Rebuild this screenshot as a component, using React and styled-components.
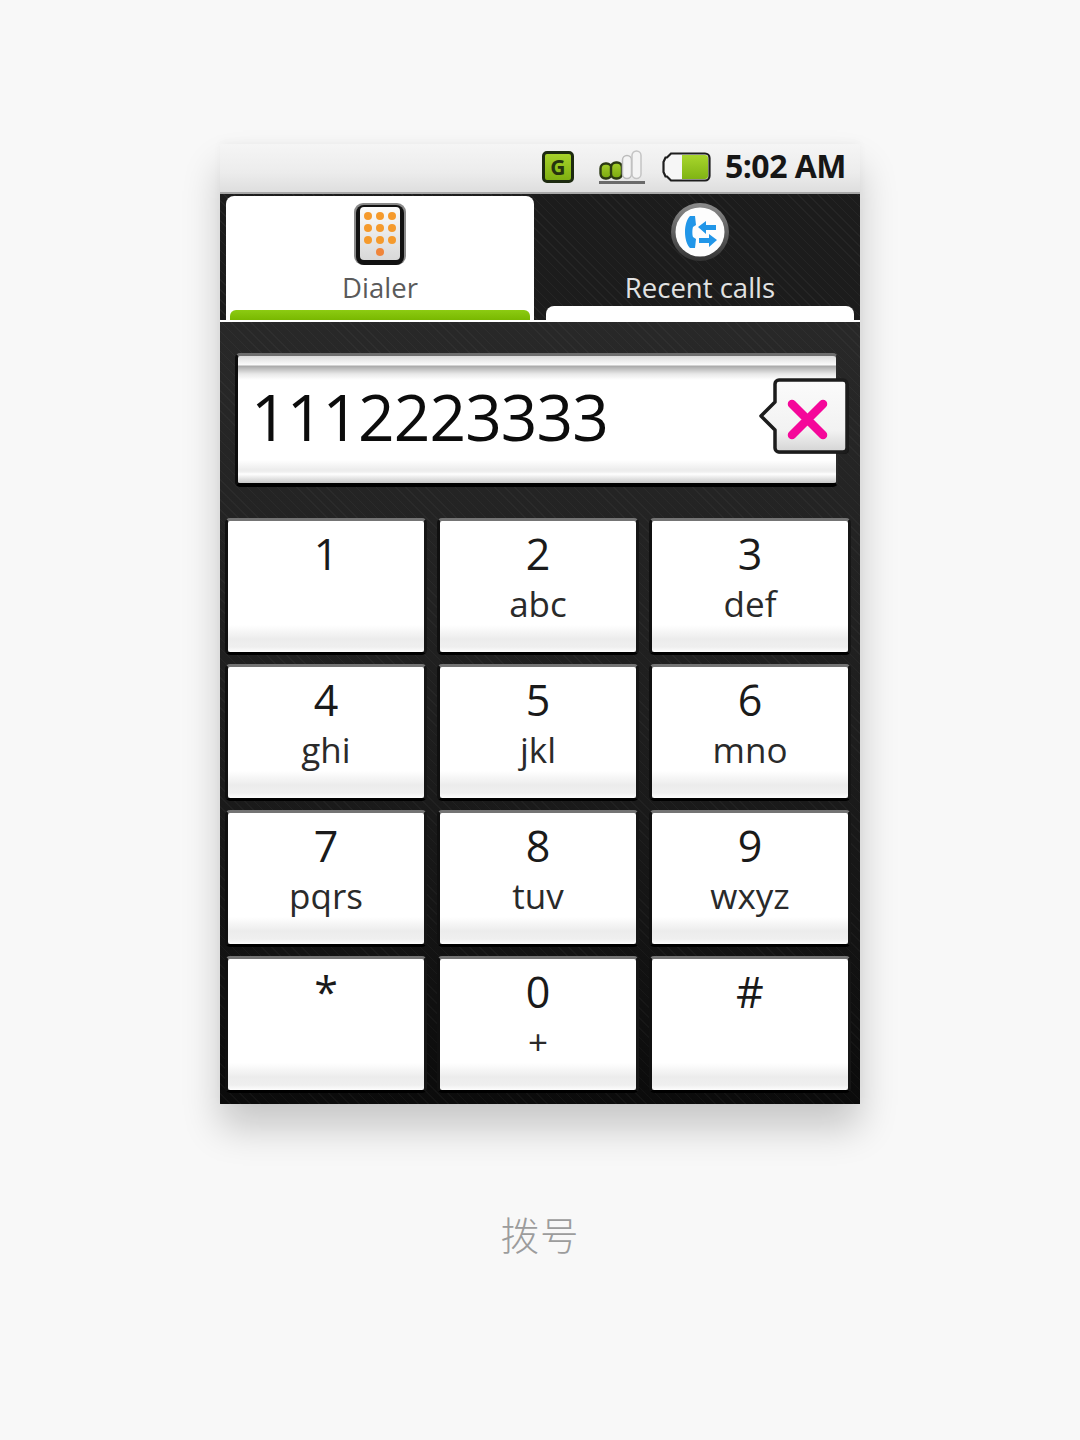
import React from "react";
import styled, { createGlobalStyle } from "styled-components";

const Global = createGlobalStyle`
  html, body { margin: 0; padding: 0; background: #f8f8f8; }
  body { font-family: "Open Sans", "Noto Sans", sans-serif; }
`;

const Page = styled.div`
  width: 1080px;
  height: 1440px;
  padding-top: 144px;
  box-sizing: border-box;
  display: flex;
  flex-direction: column;
  align-items: center;
`;

const Phone = styled.div`
  width: 640px;
  box-shadow: 0 24px 36px rgba(0, 0, 0, 0.2), 0 -2px 8px rgba(0, 0, 0, 0.03);
  background:
    repeating-linear-gradient(45deg, rgba(255,255,255,0.03) 0 1px, transparent 1px 7px),
    linear-gradient(#2b2b2b, #282828 20%, #1e1e1e 60%, #0b0b0b 100%);
`;

const StatusBar = styled.div`
  height: 50px;
  box-sizing: border-box;
  display: flex;
  align-items: center;
  justify-content: flex-end;
  padding: 0 14px 2px 0;
  background: linear-gradient(#f5f5f5, #ececec 60%, #dedede);
  border-bottom: 2px solid #a8a8a8;
`;

const IconSlot = styled.svg`
  display: block;
  flex: none;
  margin-right: ${(p) => p.$gap}px;
`;

const GBadge = styled.span`
  width: 32px;
  height: 32px;
  box-sizing: border-box;
  flex: none;
  margin-right: 25px;
  display: flex;
  align-items: center;
  justify-content: center;
  border: 3px solid #1d2a10;
  border-radius: 5px;
  background: linear-gradient(#a6d22a, #7fb011);
  color: #25330f;
  font-weight: 700;
  font-size: 21px;
  line-height: 1;
`;

const Clock = styled.span`
  font-size: 32px;
  font-weight: 700;
  letter-spacing: -0.5px;
  line-height: 40px;
  margin-top: -3px;
  color: #161616;
  white-space: nowrap;
`;

const TabBar = styled.div`
  height: 128px;
  position: relative;
  display: flex;
  padding: 2px 6px 0;
  gap: 12px;
  box-sizing: border-box;
  border-bottom: 2px solid #fff;
  background:
    repeating-linear-gradient(45deg, rgba(255,255,255,0.04) 0 1px, transparent 1px 7px),
    #1c1c1c;
`;

const Tab = styled.div`
  width: 308px;
  height: 124px;
  display: flex;
  flex-direction: column;
  align-items: center;
  padding-top: 7px;
  box-sizing: border-box;
  position: relative;
  border-radius: 8px 8px 0 0;
  background: ${(p) => (p.$active ? "#fff" : "transparent")};
`;

const TabIcon = styled.div`
  height: 60px;
  display: flex;
  align-items: flex-start;
  justify-content: center;
`;

const TabLabel = styled.span`
  font-size: 27.5px;
  line-height: 38px;
  margin-top: 6px;
  color: ${(p) => (p.$active ? "#5a5a5a" : "#e2e2e2")};
`;

const ActiveBar = styled.span`
  position: absolute;
  left: 4px;
  right: 4px;
  bottom: 0;
  height: 10px;
  border-radius: 6px 6px 0 0;
  background: linear-gradient(#8ccb12, #79b800);
`;

const IdleStrip = styled.span`
  position: absolute;
  left: 0;
  right: 0;
  bottom: 0;
  height: 14px;
  border-radius: 8px 8px 0 0;
  background: #fff;
`;

const Body = styled.div`
  padding: 31px 9px 11px 5px;
`;

const FieldWrap = styled.div`
  position: relative;
  margin: 0 13px 31px 10px;
`;

const Field = styled.div`
  height: 134px;
  box-sizing: border-box;
  display: flex;
  align-items: center;
  padding: 0 0 6px 13px;
  border-style: solid;
  border-width: 3px 2px 4px 3px;
  border-color: #6e6e6e #2a2a2a #000 #0c0c0c;
  border-radius: 5px;
  background: linear-gradient(
    #dcdcdc 0,
    #fbfbfb 9px,
    #a8a8a8 10px,
    #e8e8e8 18px,
    #fff 24px,
    #fff 104px,
    #ececec 114px,
    #f0f0f0 116px,
    #fff 118px,
    #c8c8c8 127px
  );
`;

const DialedNumber = styled.span`
  font-size: 64px;
  line-height: 1;
  letter-spacing: -0.9px;
  color: #0c0c0c;
`;

const Backspace = styled.svg`
  position: absolute;
  left: 522px;
  top: 21px;
  overflow: visible;
`;

const Keypad = styled.div`
  display: grid;
  grid-template-columns: repeat(3, 202px);
  grid-auto-rows: 137px;
  column-gap: 10px;
  row-gap: 9px;
`;

const Key = styled.div`
  box-sizing: border-box;
  display: flex;
  flex-direction: column;
  align-items: center;
  padding-top: 8px;
  border-style: solid;
  border-width: 3px;
  border-color: #747474 #161616 #000 #101010;
  border-radius: 5px;
  background: linear-gradient(#fff 0, #fff 104px, #ececec 118px, #efefef 126px, #fdfdfd 131px);
`;

const Digit = styled.span`
  font-size: 43px;
  line-height: 50px;
  color: #1a1a1a;
`;

const Letters = styled.span`
  font-size: 35px;
  line-height: 48px;
  margin-top: 1px;
  color: #2a2a2a;
`;

const Caption = styled.div`
  margin-top: 104px;
  font-family: "Noto Sans CJK SC", sans-serif;
  font-weight: 300;
  font-size: 38.5px;
  line-height: 50px;
  letter-spacing: 1px;
  color: #9c9c9c;
`;

const keys = [
  ["1", ""], ["2", "abc"], ["3", "def"],
  ["4", "ghi"], ["5", "jkl"], ["6", "mno"],
  ["7", "pqrs"], ["8", "tuv"], ["9", "wxyz"],
  ["*", ""], ["0", "+"], ["#", ""],
];

const SignalIcon = () => (
  <IconSlot $gap={17} width="46" height="34" viewBox="0 0 46 34">
    <defs>
      <linearGradient id="sg" x1="0" y1="0" x2="0" y2="1">
        <stop offset="0" stopColor="#a4cf2c" />
        <stop offset="1" stopColor="#7aa80e" />
      </linearGradient>
    </defs>
    <rect x="1.5" y="13.5" width="11" height="15" rx="5" fill="url(#sg)" stroke="#2c3a14" strokeWidth="2.4" />
    <rect x="12" y="12.5" width="11" height="16" rx="5" fill="url(#sg)" stroke="#2c3a14" strokeWidth="2.4" />
    <rect x="23.5" y="5.5" width="9" height="23" rx="4.5" fill="#f4f4f4" stroke="#bbb" strokeWidth="1.5" />
    <rect x="33" y="1" width="9" height="27.5" rx="4.5" fill="#f4f4f4" stroke="#c4c4c4" strokeWidth="1.5" />
    <rect x="0" y="31" width="46" height="3" fill="#6a6a6a" />
  </IconSlot>
);

const BatteryIcon = () => (
  <IconSlot $gap={14} width="49" height="30" viewBox="0 0 49 30">
    <defs>
      <linearGradient id="bg" x1="0" y1="0" x2="0" y2="1">
        <stop offset="0" stopColor="#a8d62c" />
        <stop offset="1" stopColor="#80b414" />
      </linearGradient>
    </defs>
    <path d="M9 1.5h34a4.5 4.5 0 0 1 4.5 4.5v18a4.5 4.5 0 0 1-4.5 4.5H9L5 24.5H3.5L1.5 20V10l2-4.5H5z" fill="#f6f6f6" stroke="#1e1e1e" strokeWidth="2.2" />
    <path d="M20 3h23a3 3 0 0 1 3 3v18a3 3 0 0 1-3 3H20z" fill="url(#bg)" />
  </IconSlot>
);

const DialerIcon = () => (
  <svg width="52" height="62" viewBox="1 1 52 62">
    <defs>
      <linearGradient id="pad" x1="0" y1="0" x2="0" y2="1">
        <stop offset="0" stopColor="#fbfbfb" />
        <stop offset="1" stopColor="#d8d8d8" />
      </linearGradient>
    </defs>
    <rect x="1" y="1" width="52" height="62" rx="9" fill="#8a8a8a" />
    <rect x="3" y="3" width="48" height="60" rx="8" fill="#111" />
    <rect x="7" y="5" width="40" height="53" rx="4" fill="url(#pad)" />
    {[14, 26, 38].flatMap((y) =>
      [15, 27, 39].map((x) => <circle key={`${x}-${y}`} cx={x} cy={y} r="4" fill="#f59a2c" />)
    )}
    <circle cx="27" cy="50" r="4" fill="#f0853a" />
  </svg>
);

const RecentIcon = () => (
  <svg width="60" height="60" viewBox="0 1 60 60">
    <defs>
      <linearGradient id="ring" x1="0" y1="0" x2="0" y2="1">
        <stop offset="0" stopColor="#8c8c8c" />
        <stop offset="1" stopColor="#333" />
      </linearGradient>
    </defs>
    <circle cx="30" cy="30" r="29" fill="url(#ring)" />
    <circle cx="30" cy="30" r="24.5" fill="#fdfdfd" />
    <path d="M20 14h5l1 9-3 2c-.8 2-.8 8 0 10l3 2-1 9h-5c-3-3-5-9-5-16s2-13 5-16z" fill="#2196e8" />
    <path d="M28 25l8-6v4h10v5H36v4z" fill="#2196e8" />
    <path d="M47 38l-8-6v4H29v5h10v4z" fill="#2196e8" />
  </svg>
);

export default function App() {
  return (
    <Page>
      <Global />
      <Phone>
        <StatusBar>
          <GBadge>G</GBadge>
          <SignalIcon />
          <BatteryIcon />
          <Clock>5:02 AM</Clock>
        </StatusBar>
        <TabBar>
          <Tab $active>
            <TabIcon><DialerIcon /></TabIcon>
            <TabLabel $active>Dialer</TabLabel>
            <ActiveBar />
          </Tab>
          <Tab>
            <TabIcon><RecentIcon /></TabIcon>
            <TabLabel>Recent calls</TabLabel>
            <IdleStrip />
          </Tab>
        </TabBar>
        <Body>
          <FieldWrap>
            <Field>
              <DialedNumber>1112223333</DialedNumber>
            </Field>
            <Backspace width="92" height="80" viewBox="0 0 92 80">
              <defs>
                <linearGradient id="bk" x1="0" y1="0" x2="0" y2="1">
                  <stop offset="0" stopColor="#fbfbfb" />
                  <stop offset="0.7" stopColor="#f2f2f2" />
                  <stop offset="1" stopColor="#d4d4d4" />
                </linearGradient>
              </defs>
              <path d="M23 8h65a4 4 0 0 1 4 4v64a4 4 0 0 1-4 4H23a4 4 0 0 1-4-4V58L5 44l14-14V12a4 4 0 0 1 4-4z" fill="#000" opacity="0.35" />
              <path d="M22 6h64a4 4 0 0 1 4 4v64a4 4 0 0 1-4 4H22a4 4 0 0 1-4-4V56L4 42l14-14V10a4 4 0 0 1 4-4z" fill="url(#bk)" stroke="#1c1c1c" strokeWidth="3.5" strokeLinejoin="round" />
              <path d="M35 30l31 31M66 30L35 61" stroke="#f5079a" strokeWidth="8.5" strokeLinecap="round" />
            </Backspace>
          </FieldWrap>
          <Keypad>
            {keys.map(([d, l]) => (
              <Key key={d}>
                <Digit>{d}</Digit>
                <Letters>{l}</Letters>
              </Key>
            ))}
          </Keypad>
        </Body>
      </Phone>
      <Caption>拨号</Caption>
    </Page>
  );
}
